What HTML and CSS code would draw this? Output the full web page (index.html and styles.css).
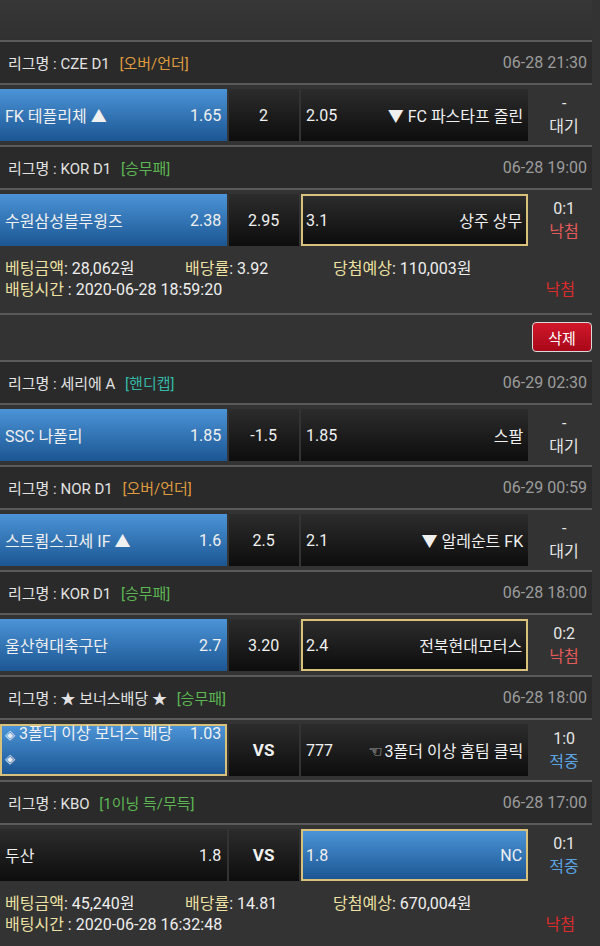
FILE: index.html
```html
<!DOCTYPE html>
<html lang="ko">
<head>
    <meta charset="UTF-8">
    <meta name="viewport" content="width=device-width, initial-scale=1.0">
    <title>배팅내역</title>
    <link rel="stylesheet" href="styles.css">
</head>
<body>
    <div class="list">
        <div class="top"></div>

        <!-- CZE D1 -->
        <div class="league">
            <span class="name">리그명 : CZE D1 <span class="type ou">[오버/언더]</span></span>
            <span class="date">06-28 21:30</span>
        </div>
        <div class="match">
            <div class="pick home blue"><span class="team">FK 테플리체 ▲</span><span class="odds">1.65</span></div>
            <div class="pick draw">2</div>
            <div class="pick away"><span class="odds">2.05</span><span class="team">▼ FC 파스타프 즐린</span></div>
            <div class="result"><span class="score">-</span><span class="wait">대기</span></div>
        </div>

        <!-- KOR D1 -->
        <div class="league">
            <span class="name">리그명 : KOR D1 <span class="type wdl">[승무패]</span></span>
            <span class="date">06-28 19:00</span>
        </div>
        <div class="match">
            <div class="pick home blue"><span class="team">수원삼성블루윙즈</span><span class="odds">2.38</span></div>
            <div class="pick draw">2.95</div>
            <div class="pick away picked"><span class="odds">3.1</span><span class="team">상주 상무</span></div>
            <div class="result"><span class="score">0:1</span><span class="lose">낙첨</span></div>
        </div>
        <div class="bet-info">
            <div class="row">
                <span class="col c1"><span class="label">베팅금액</span>: 28,062원</span>
                <span class="col c2"><span class="label">배당률</span>: 3.92</span>
                <span class="col"><span class="label">당첨예상</span>: 110,003원</span>
            </div>
            <div class="row">
                <span class="col"><span class="label">배팅시간</span> : 2020-06-28 18:59:20</span>
                <span class="status lose-strong">낙첨</span>
            </div>
        </div>
        <div class="actions">
            <button class="btn-delete" type="button">삭제</button>
        </div>

        <!-- 세리에 A -->
        <div class="league">
            <span class="name">리그명 : 세리에 A <span class="type hc">[핸디캡]</span></span>
            <span class="date">06-29 02:30</span>
        </div>
        <div class="match">
            <div class="pick home blue"><span class="team">SSC 나폴리</span><span class="odds">1.85</span></div>
            <div class="pick draw">-1.5</div>
            <div class="pick away"><span class="odds">1.85</span><span class="team">스팔</span></div>
            <div class="result"><span class="score">-</span><span class="wait">대기</span></div>
        </div>

        <!-- NOR D1 -->
        <div class="league">
            <span class="name">리그명 : NOR D1 <span class="type ou">[오버/언더]</span></span>
            <span class="date">06-29 00:59</span>
        </div>
        <div class="match">
            <div class="pick home blue"><span class="team">스트룀스고세 IF ▲</span><span class="odds">1.6</span></div>
            <div class="pick draw">2.5</div>
            <div class="pick away"><span class="odds">2.1</span><span class="team">▼ 알레순트 FK</span></div>
            <div class="result"><span class="score">-</span><span class="wait">대기</span></div>
        </div>

        <!-- KOR D1 -->
        <div class="league">
            <span class="name">리그명 : KOR D1 <span class="type wdl">[승무패]</span></span>
            <span class="date">06-28 18:00</span>
        </div>
        <div class="match">
            <div class="pick home blue"><span class="team">울산현대축구단</span><span class="odds">2.7</span></div>
            <div class="pick draw">3.20</div>
            <div class="pick away picked"><span class="odds">2.4</span><span class="team">전북현대모터스</span></div>
            <div class="result"><span class="score">0:2</span><span class="lose">낙첨</span></div>
        </div>

        <!-- 보너스배당 -->
        <div class="league">
            <span class="name">리그명 : ★ 보너스배당 ★ <span class="type wdl">[승무패]</span></span>
            <span class="date">06-28 18:00</span>
        </div>
        <div class="match">
            <div class="pick home blue picked bonus"><span class="team"><span class="sym">◈</span> 3폴더 이상 보너스 배당 <span class="sym">◈</span></span><span class="odds">1.03</span></div>
            <div class="pick draw vs">VS</div>
            <div class="pick away"><span class="odds">777</span><span class="team"><span class="hand">☜</span>3폴더 이상 홈팀 클릭</span></div>
            <div class="result"><span class="score">1:0</span><span class="win">적중</span></div>
        </div>

        <!-- KBO -->
        <div class="league">
            <span class="name">리그명 : KBO <span class="type wdl">[1이닝 득/무득]</span></span>
            <span class="date">06-28 17:00</span>
        </div>
        <div class="match">
            <div class="pick home"><span class="team">두산</span><span class="odds">1.8</span></div>
            <div class="pick draw vs">VS</div>
            <div class="pick away blue picked"><span class="odds">1.8</span><span class="team">NC</span></div>
            <div class="result"><span class="score">0:1</span><span class="win">적중</span></div>
        </div>
        <div class="bet-info">
            <div class="row">
                <span class="col c1"><span class="label">베팅금액</span>: 45,240원</span>
                <span class="col c2"><span class="label">배당률</span>: 14.81</span>
                <span class="col"><span class="label">당첨예상</span>: 670,004원</span>
            </div>
            <div class="row">
                <span class="col"><span class="label">배팅시간</span> : 2020-06-28 16:32:48</span>
                <span class="status lose-strong">낙첨</span>
            </div>
        </div>
        <div class="actions last">
            <button class="btn-more" type="button"></button>
        </div>
    </div>
</body>
</html>
```

FILE: styles.css
```css
body {
    margin: 0;
    background-color: #333333;
    color: #e6e6e6;
    font-family: Roboto, "Noto Sans CJK KR", "DejaVu Sans", sans-serif;
    font-size: 16px;
}
.list {
    width: 592px;
}
.top {
    height: 40px;
    background: linear-gradient(#373737, #313131);
}
.league {
    display: flex;
    justify-content: space-between;
    align-items: center;
    height: 41px;
    padding: 0 5px 0 8px;
    background-color: #2a2a2a;
    border-top: 2px solid #5a5a5a;
    border-bottom: 2px solid #5a5a5a;
    font-size: 15px;
    color: #e2e2e2;
}
.league .type {
    margin-left: 6px;
}
.league .date {
    color: #9c9c9c;
    font-size: 16px;
}
.ou { color: #df9a3e; }
.wdl { color: #5cb652; }
.hc { color: #35b8a5; }
.match {
    display: flex;
    gap: 2px;
    padding: 4px 0;
}
.pick {
    display: flex;
    align-items: center;
    justify-content: space-between;
    box-sizing: border-box;
    height: 52px;
    padding: 0 6px 0 5px;
    background: linear-gradient(#2c2c2c, #0d0d0d);
    color: #f0f0f0;
    white-space: nowrap;
}
.home, .away {
    width: 228px;
}
.away {
    padding: 0 5px;
}
.draw {
    width: 70px;
    justify-content: center;
}
.draw.vs {
    font-weight: bold;
    font-size: 17px;
}
.blue {
    background: linear-gradient(#4b94d7, #1c5693);
}
.picked {
    border: 2px solid #d8c27b;
    padding: 0 4px 0 3px;
}
.bonus {
    align-items: flex-start;
    white-space: normal;
    line-height: 23px;
}
.bonus .team {
    width: 170px;
    margin-top: -4px;
}
.bonus .odds {
    margin-top: -4px;
}
.sym {
    font-family: "DejaVu Sans", sans-serif;
    font-size: 13px;
    color: #e8eef5;
}
.hand {
    font-family: "DejaVu Sans", sans-serif;
    font-size: 16px;
    margin-right: 2px;
}
.result {
    display: flex;
    flex-direction: column;
    align-items: center;
    justify-content: center;
    box-sizing: border-box;
    width: 62px;
    padding-left: 6px;
    line-height: 23px;
}
.wait { color: #e6e6e6; }
.lose { color: #e35a5a; }
.win { color: #5aa4e2; }
.bet-info {
    padding: 8px 17px 13px 5px;
    font-size: 16px;
    color: #eeeeee;
}
.bet-info .row {
    display: flex;
    align-items: center;
    line-height: 21px;
}
.bet-info .c1 {
    width: 180px;
}
.bet-info .c2 {
    width: 148px;
}
.label {
    color: #ece0a2;
}
.status {
    margin-left: auto;
}
.lose-strong {
    color: #dd2b2b;
}
.actions {
    display: flex;
    justify-content: flex-end;
    padding: 7px 0 8px;
    border-top: 2px solid #5a5a5a;
}
.actions.last {
    border-top: none;
    padding: 0;
}
.btn-delete {
    width: 60px;
    height: 30px;
    border: 1px solid #d9d9d9;
    border-radius: 4px;
    background: linear-gradient(#d0182a, #a8081a);
    color: #ffffff;
    font-family: "Noto Sans CJK KR", sans-serif;
    font-size: 15px;
    padding: 0;
}
.btn-more {
    width: 56px;
    height: 30px;
    margin-right: 2px;
    border: 1px solid #555c66;
    border-radius: 4px;
    background-color: #1f2328;
    padding: 0;
}
```
